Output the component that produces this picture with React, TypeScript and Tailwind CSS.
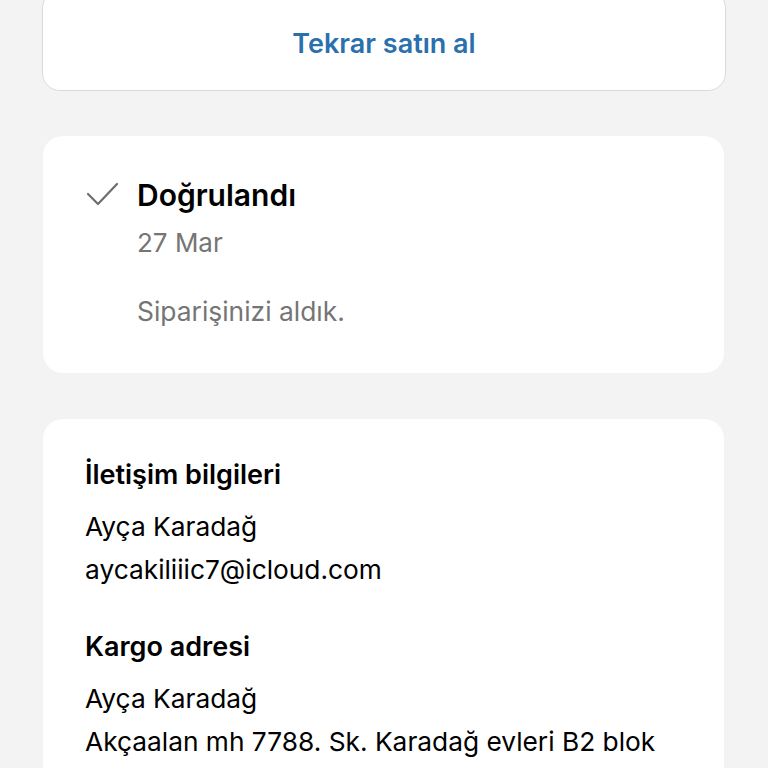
export default function App() {
  return (
    <div
      className="min-h-screen overflow-hidden bg-[#f3f3f3] px-[42px] text-black"
      style={{ fontFamily: "Inter, 'Noto Sans', sans-serif" }}
    >
      <div className="-mt-[10px] flex h-[101px] items-center justify-center rounded-[18px] border border-[#dadada] bg-white pt-[7px]">
        <span className="text-[27px] font-semibold leading-[36px] text-[#2a70ad]">Tekrar satın al</span>
      </div>

      <div className="mt-[45px] ml-px mr-[2px] rounded-[20px] bg-white pt-[41px] pb-[44px] pl-[42px]">
        <div className="flex items-center">
          <svg width="34" height="26" viewBox="0 0 34 26" className="mr-[18px] shrink-0">
            <path
              d="M3 12 L13 22 L32 2"
              fill="none"
              stroke="#6e6e6e"
              strokeWidth="2.2"
              strokeLinecap="round"
              strokeLinejoin="round"
            />
          </svg>
          <span className="text-[30px] font-semibold leading-[36px]">Doğrulandı</span>
        </div>
        <div className="pl-[52px]">
          <p className="mt-[12px] text-[26px] leading-[36px] text-[#757575]">27 Mar</p>
          <p className="mt-[32px] text-[26.4px] leading-[36px] text-[#757575]">Siparişinizi aldık.</p>
        </div>
      </div>

      <div className="mt-[46px] ml-px mr-[2px] rounded-t-[20px] bg-white pt-[38px] pb-[40px] pl-[42px]">
        <h3 className="text-[27px] font-semibold leading-[36px]">İletişim bilgileri</h3>
        <div className="mt-[12px] text-[26.3px] leading-[43px]">
          <p>Ayça Karadağ</p>
          <p>aycakiliiic7@icloud.com</p>
        </div>
        <h3 className="mt-[38px] text-[27px] font-semibold leading-[36px]">Kargo adresi</h3>
        <div className="mt-[12px] text-[26.3px] leading-[43px]">
          <p>Ayça Karadağ</p>
          <p>Akçaalan mh 7788. Sk. Karadağ evleri B2 blok</p>
        </div>
      </div>
    </div>
  );
}
